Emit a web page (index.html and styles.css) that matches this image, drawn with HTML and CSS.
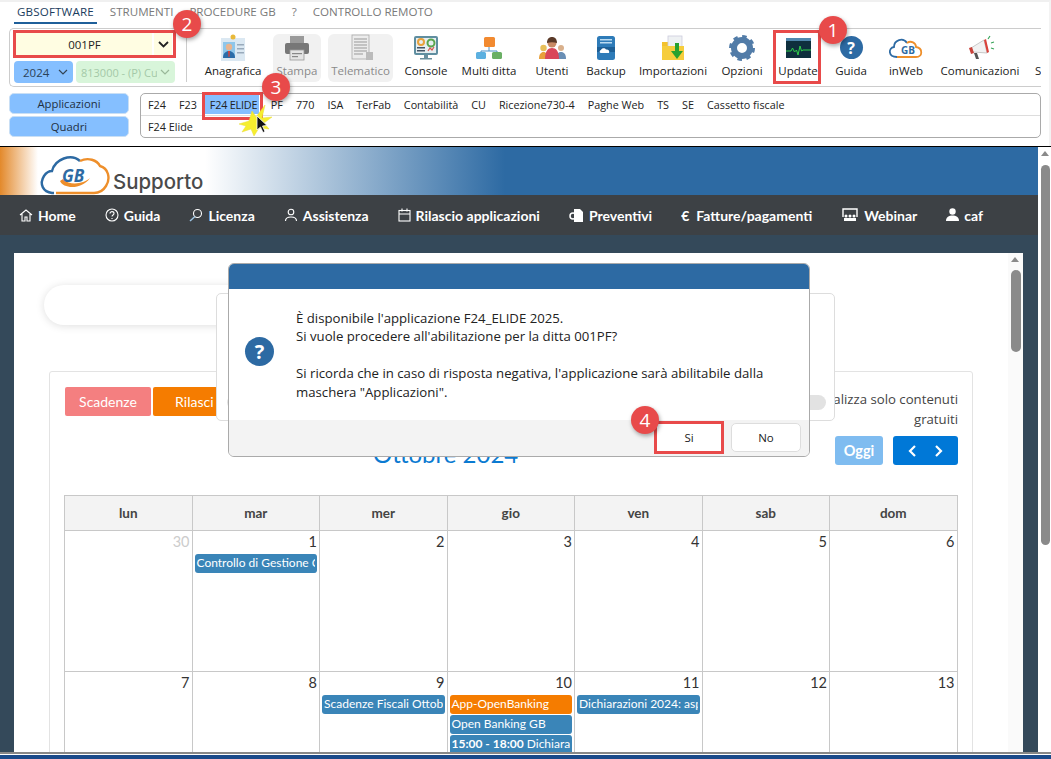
FILE: index.html
```html
<!DOCTYPE html>
<html lang="it">
<head>
<meta charset="utf-8">
<title>GB Software</title>
<link rel="stylesheet" href="styles.css">
</head>
<body>
<div class="app">
  <header class="top">
    <nav class="tabs">
      <span class="tab active">GBSOFTWARE</span>
      <span class="tab">STRUMENTI</span>
      <span class="tab">PROCEDURE GB</span>
      <span class="tab">?</span>
      <span class="tab">CONTROLLO REMOTO</span>
    </nav>
    <div class="toolbar">
      <div class="selectors">
        <div class="sel-company"><span class="sel-value">001PF</span><span class="sel-arrow"><svg width="11" height="7" viewBox="0 0 11 7"><path d="M1 1l4.500 4.500L10 1" fill="none" stroke="#222" stroke-width="1.800"/></svg></span></div>
        <div class="sel-row">
          <div class="sel-year">2024<svg width="10" height="6" viewBox="0 0 10 6"><path d="M1 1l4 4 4-4" fill="none" stroke="#345" stroke-width="1.200"/></svg></div>
          <div class="sel-code"><span class="sel-code-text">813000 - (P) Cu</span><svg width="10" height="6" viewBox="0 0 10 6"><path d="M1 1l4 4 4-4" fill="none" stroke="#9ab89a" stroke-width="1.200"/></svg></div>
        </div>
      </div>
      <div class="tools">
        <div class="tool">
          <svg class="ico" width="30" height="28" viewBox="0 0 30 28"><rect x="3" y="4" width="24" height="23" fill="#dbe8f2"/><rect x="5" y="8" width="12" height="15" fill="#8ec6ea"/><rect x="19" y="10" width="7" height="1.500" fill="#9ab"/><rect x="19" y="14" width="7" height="1.500" fill="#9ab"/><rect x="19" y="18" width="7" height="1.500" fill="#9ab"/><circle cx="15" cy="3" r="2.500" fill="#e8b93a"/><circle cx="11" cy="13" r="3.200" fill="#e9b48e"/><path d="M5 24c0-5 3-7 6-7s6 2 6 7z" fill="#2b6ca8"/><path d="M10 17h2l-.5 6h-1z" fill="#d9423a"/></svg>
          <span class="label">Anagrafica</span>
        </div>
        <div class="tool off">
          <svg class="ico" width="30" height="28" viewBox="0 0 30 28"><rect x="8" y="2" width="14" height="9" fill="#9a9a9a"/><rect x="3" y="9" width="24" height="11" rx="2" fill="#777"/><rect x="8" y="16" width="14" height="10" fill="#e4e4e4" stroke="#999" stroke-width=".8"/><rect x="10" y="19" width="10" height="1.200" fill="#888"/><rect x="10" y="22" width="6" height="1.200" fill="#888"/></svg>
          <span class="label">Stampa</span>
        </div>
        <div class="tool off">
          <svg class="ico" width="30" height="28" viewBox="0 0 30 28"><rect x="6" y="1" width="17" height="24" fill="#ececec" stroke="#aaa" stroke-width=".8"/><path d="M8 5h13M8 8h13M8 11h13M8 14h13M8 17h13M8 20h9" stroke="#999" stroke-width="1"/><rect x="20" y="18" width="7" height="8" fill="#bbb"/></svg>
          <span class="label">Telematico</span>
        </div>
        <div class="tool">
          <svg class="ico" width="30" height="28" viewBox="0 0 30 28"><rect x="3" y="2" width="24" height="19" rx="2" fill="#5f8ea0"/><rect x="5" y="4" width="20" height="15" fill="#e6eef1"/><circle cx="10" cy="8" r="3" fill="none" stroke="#e9a23b" stroke-width="2"/><circle cx="20" cy="9" r="3.500" fill="none" stroke="#5aa64d" stroke-width="2"/><rect x="6" y="13" width="8" height="1.500" fill="#456"/><rect x="6" y="16" width="8" height="1.500" fill="#456"/><path d="M17 17l2-3 2 2 2-3" fill="none" stroke="#d9534f" stroke-width="1.200"/><rect x="13" y="21" width="4" height="3" fill="#6a8f9e"/><rect x="9" y="24" width="12" height="1.500" fill="#6a8f9e"/></svg>
          <span class="label">Console</span>
        </div>
        <div class="tool">
          <svg class="ico" width="30" height="28" viewBox="0 0 30 28"><path d="M15 12v5M7 20v-3h16v3" fill="none" stroke="#4a90c8" stroke-width="1"/><rect x="10" y="3" width="11" height="10" rx="1.500" fill="#f28a30"/><rect x="2" y="18" width="10" height="7" rx="1.500" fill="#5cb0e0"/><rect x="18" y="18" width="10" height="7" rx="1.500" fill="#6aaf64"/></svg>
          <span class="label">Multi ditta</span>
        </div>
        <div class="tool">
          <svg class="ico" width="30" height="28" viewBox="0 0 30 28"><circle cx="6.500" cy="14" r="3.200" fill="#e8c05a"/><path d="M2 25c0-5 2-7 4.500-7S11 20 11 25z" fill="#e8a03a"/><circle cx="24" cy="14" r="3" fill="#d9b08c"/><path d="M19 25c0-5 2-7 5-7s5 2 5 7z" fill="#6a8fb5"/><circle cx="15" cy="9" r="4.500" fill="#c98a64"/><path d="M10 9c0-4 2-6 5-6s5 2 5 6c-3-1-7-1-10 0z" fill="#5a3a28"/><path d="M8 25c0-8 3-11 7-11s7 3 7 11z" fill="#d9475a"/></svg>
          <span class="label">Utenti</span>
        </div>
        <div class="tool">
          <svg class="ico" width="30" height="28" viewBox="0 0 30 28"><rect x="6" y="2" width="18" height="24" rx="2.500" fill="#2e7bb8"/><rect x="9" y="5" width="12" height="1.500" fill="#bcdcf2"/><rect x="9" y="8" width="12" height="1.500" fill="#bcdcf2"/><path d="M6 13h18v5H6z" fill="#1d5f96"/><path d="M10 19c-1.500 0-2-2.500 0-3 .5-2 4-2.500 5-.5 2-.5 4 1 3 3.500z" fill="#fff"/></svg>
          <span class="label">Backup</span>
        </div>
        <div class="tool">
          <svg class="ico" width="30" height="28" viewBox="0 0 30 28"><path d="M4 8h8l2 2v16H4z" fill="#f3c22e"/><rect x="10" y="2" width="14" height="14" fill="#eef1f3" stroke="#ccd" stroke-width=".8"/><path d="M4 12h22v14H4z" fill="#f6cd3c"/><path d="M17 9h4v8h4l-6 8-6-8h4z" fill="#27a12f"/></svg>
          <span class="label">Importazioni</span>
        </div>
        <div class="tool">
          <svg class="ico" width="30" height="28" viewBox="0 0 30 28"><circle cx="15" cy="14" r="8" fill="none" stroke="#527ca8" stroke-width="6"/><circle cx="15" cy="14" r="11.500" fill="none" stroke="#527ca8" stroke-width="3" stroke-dasharray="4.500 4.500"/></svg>
          <span class="label">Opzioni</span>
        </div>
        <div class="tool">
          <svg class="ico" width="30" height="28" viewBox="0 0 30 28"><rect x="3" y="4" width="25" height="20" fill="#0e2f3d"/><rect x="3" y="4" width="25" height="3" fill="#4f87ad"/><path d="M3 17h5l1.500-3 2 4 2-2 1.500 5 2-9 1.500 5 1.500-1H28" fill="none" stroke="#2fd04a" stroke-width="1"/></svg>
          <span class="label">Update</span>
        </div>
        <div class="tool">
          <span class="help-round small">?</span>
          <span class="label">Guida</span>
        </div>
        <div class="tool">
          <svg class="ico wide" width="36" height="28" viewBox="0 0 36 28"><path d="M9 23c-9 0-9-9-3-10 0-7 9-10 13-4" fill="none" stroke="#2d6aa3" stroke-width="1.800"/><path d="M19 9c4-3 9 0 9 4 7 1 7 10 0 10H9" fill="none" stroke="#ee8f2b" stroke-width="1.800"/><text x="13" y="20" class="cloud-text">GB</text></svg>
          <span class="label">inWeb</span>
        </div>
        <div class="tool">
          <svg class="ico" width="30" height="28" viewBox="0 0 30 28"><path d="M6 14l13-8 3 13-14-1z" fill="#f2f2f2" stroke="#bbb" stroke-width=".8"/><path d="M19 6l3 13 2-1-3-13z" fill="#d9423a"/><path d="M4 14l3-1 2 6-3 1z" fill="#c9423a"/><path d="M9 19l2 6h3l-2-6z" fill="#555"/><path d="M23 5l2-3M26 9l3-1M26 14l3 1" stroke="#3aa55a" stroke-width="1.200"/></svg>
          <span class="label">Comunicazioni</span>
        </div>
        <div class="tool tool-cut">
          <span class="ico"></span>
          <span class="label">Strumenti</span>
        </div>
      </div>
    </div>
    <div class="appbar">
      <div class="appbtns">
        <span class="appbtn">Applicazioni</span>
        <span class="appbtn">Quadri</span>
      </div>
      <div class="apppanel">
        <div class="approw">
          <span>F24</span><span>F23</span><span class="selected">F24 ELIDE</span><span>PF</span><span>770</span><span>ISA</span><span>TerFab</span><span>Contabilità</span><span>CU</span><span>Ricezione730-4</span><span>Paghe Web</span><span>TS</span><span>SE</span><span>Cassetto fiscale</span>
        </div>
        <div class="approw">
          <span>F24 Elide</span>
        </div>
      </div>
    </div>
  </header>

  <section class="web">
    <div class="site">
      <div class="banner">
        <svg class="logo" width="72" height="44" viewBox="0 0 72 44"><path d="M16 42H14C5 41 1 33 6 25c2-3 5-5 8-5 3-12 19-18 28-10" fill="none" stroke="#2d6aa3" stroke-width="2.400"/><path d="M42 10c8-4 17-1 20 5 8 2 11 12 6 20-3 5-7 7-12 7H18" fill="none" stroke="#ee8f2b" stroke-width="2.400"/><path d="M22 30c3 8 22 9 30-3-7 6-20 8-27 1z" fill="#ee8f2b"/><text x="24" y="31" class="logo-mark">GB</text></svg>
        <span class="brand">Supporto</span>
      </div>
      <nav class="sitenav">
        <span class="navitem"><svg width="14" height="14" viewBox="0 0 14 14"><path d="M1 7l6-5 6 5M3 6v7h3V9h2v4h3V6" fill="none" stroke="#fff" stroke-width="1.100"/></svg>Home</span>
        <span class="navitem"><svg width="14" height="14" viewBox="0 0 14 14"><circle cx="7" cy="7" r="6" fill="none" stroke="#fff" stroke-width="1.100"/><path d="M5 5.500c0-2.500 4-2.500 4 0 0 1.500-2 1.500-2 3M7 10v1" fill="none" stroke="#fff" stroke-width="1.100"/></svg>Guida</span>
        <span class="navitem"><svg width="14" height="14" viewBox="0 0 14 14"><circle cx="8.500" cy="5.500" r="4" fill="none" stroke="#fff" stroke-width="1.100"/><path d="M6 8.500L1 13" stroke="#9cc4e4" stroke-width="1.500"/></svg>Licenza</span>
        <span class="navitem"><svg width="14" height="14" viewBox="0 0 14 14"><circle cx="7" cy="4" r="2.800" fill="none" stroke="#fff" stroke-width="1.100"/><path d="M1.500 13c0-3 2.500-4 5.500-4s5.500 1 5.500 4" fill="none" stroke="#fff" stroke-width="1.100"/></svg>Assistenza</span>
        <span class="navitem"><svg width="13" height="14" viewBox="0 0 13 14"><rect x="1" y="2.500" width="11" height="10.500" fill="none" stroke="#fff" stroke-width="1.100"/><path d="M1 6h11M4 .5v3M9 .5v3" stroke="#fff" stroke-width="1.100"/></svg>Rilascio applicazioni</span>
        <span class="navitem"><svg width="15" height="15" viewBox="0 0 15 15"><path d="M5 1h6l3 3v10H5z" fill="#fff"/><circle cx="4" cy="8" r="3" fill="none" stroke="#fff" stroke-width="1.500"/></svg>Preventivi</span>
        <span class="navitem navtight"><span class="euro">€</span>Fatture/pagamenti</span>
        <span class="navitem"><svg width="18" height="14" viewBox="0 0 16 14"><path d="M1 9V1h14v8" fill="none" stroke="#fff" stroke-width="1.400"/><circle cx="4" cy="8" r="1.500" fill="#fff"/><circle cx="8" cy="8" r="1.500" fill="#fff"/><circle cx="12" cy="8" r="1.500" fill="#fff"/><path d="M2 13v-3h4v3zM6 13v-3h4v3zM10 13v-3h4v3z" fill="#fff"/></svg>Webinar</span>
        <span class="navitem"><svg width="13" height="14" viewBox="0 0 13 14"><circle cx="6.500" cy="3.500" r="3.200" fill="#fff"/><path d="M0 13c0-4 3-5.500 6.500-5.500S13 9 13 13z" fill="#fff"/></svg>caf</span>
      </nav>
      <div class="main">
        <div class="content">
          <div class="pane">
            <div class="searchpill"></div>
            <div class="card">
              <div class="filters">
                <div class="filter-btns">
                  <span class="fbtn red">Scadenze</span>
                  <span class="fbtn orange">Rilasci Applicazioni</span>
                </div>
                <p class="freeonly">Visualizza solo contenuti gratuiti</p>
              </div>
              <div class="calhead">
                <h2 class="month">Ottobre 2024</h2>
                <div class="calctl">
                  <span class="today">Oggi</span>
                  <span class="pager">
                    <svg width="10" height="14" viewBox="0 0 10 14"><path d="M8 2L3 7l5 5" fill="none" stroke="#fff" stroke-width="2.200"/></svg>
                    <svg width="10" height="14" viewBox="0 0 10 14"><path d="M2 2l5 5-5 5" fill="none" stroke="#fff" stroke-width="2.200"/></svg>
                  </span>
                </div>
              </div>
              <div class="calendar">
                <div class="dow">lun</div><div class="dow">mar</div><div class="dow">mer</div><div class="dow">gio</div><div class="dow">ven</div><div class="dow">sab</div><div class="dow">dom</div>

                <div class="day"><div class="num muted">30</div></div>
                <div class="day"><div class="num">1</div><div class="ev">Controllo di Gestione Online</div></div>
                <div class="day"><div class="num">2</div></div>
                <div class="day"><div class="num">3</div></div>
                <div class="day"><div class="num">4</div></div>
                <div class="day"><div class="num">5</div></div>
                <div class="day"><div class="num">6</div></div>

                <div class="day"><div class="num">7</div></div>
                <div class="day"><div class="num">8</div></div>
                <div class="day"><div class="num">9</div><div class="ev">Scadenze Fiscali Ottobre</div></div>
                <div class="day"><div class="num">10</div><div class="ev org">App-OpenBanking</div><div class="ev">Open Banking GB</div><div class="ev"><b>15:00 - 18:00</b> Dichiarazioni</div></div>
                <div class="day"><div class="num">11</div><div class="ev">Dichiarazioni 2024: aspetti</div></div>
                <div class="day"><div class="num">12</div></div>
                <div class="day"><div class="num">13</div></div>
              </div>
            </div>
          </div>
          <div class="innerscroll"><span class="arrow-up"></span><span class="thumb"></span></div>
        </div>
      </div>
    </div>
    <div class="outerscroll"><span class="arrow-up"></span><span class="thumb"></span></div>
  </section>
  <footer class="taskbar"></footer>

  <!-- overlays -->
  <div class="backmodal"><span class="backbar"></span></div>
  <div class="dialog">
    <div class="dlg-head"></div>
    <div class="dlg-body">
      <span class="help-round">?</span>
      <div class="dlg-text">
        <p>È disponibile l'applicazione F24_ELIDE 2025.<br>Si vuole procedere all'abilitazione per la ditta 001PF?</p>
        <p>Si ricorda che in caso di risposta negativa, l'applicazione sarà abilitabile dalla maschera "Applicazioni".</p>
      </div>
    </div>
    <div class="dlg-foot">
      <button class="dbtn yes">Si</button>
      <button class="dbtn no">No</button>
    </div>
  </div>

  <span class="mark mark-company"></span>
  <span class="mark mark-elide"></span>
  <span class="mark mark-update"></span>
  <span class="badge b1">1</span>
  <span class="badge b2">2</span>
  <span class="badge b3">3</span>
  <span class="badge b4">4</span>
  <svg class="cursor" width="40" height="36" viewBox="0 0 40 36"><path d="M1 23l10-3 3-10 4 6 9-12-3 13 10-1-8 6 5 6-10-1-5 8-3-7-9 3 4-6z" fill="#f6ee2e" stroke="#e8dc3a" stroke-width=".5"/><path d="M19 15v14l3.500-3 2.500 5.500 2-1-2.500-5.500 4.500-.5z" fill="#111" stroke="#fff" stroke-width=".8"/></svg>
</div>
</body>
</html>
```
FILE: styles.css
```css
* { box-sizing: border-box; }
html, body { margin: 0; padding: 0; height: 100%; overflow: hidden; }
body { font-family: "Open Sans", "Noto Sans", sans-serif; color: #222; background: #f3f3f3; }
p, h2 { margin: 0; }

.app { position: relative; width: 1051px; height: 759px; display: flex; flex-direction: column; overflow: hidden; }

/* top application chrome */
.top { height: 146px; flex: none; background: #fff; border-top: 2px solid #f0f0f0; border-right: 2px solid #f3f3f3; }
.tabs { height: 26px; display: flex; gap: 16px; padding-left: 17px; font-size: 11.6px; line-height: 20px; color: #7a7a7a; }
.tab { height: 22px; white-space: nowrap; }
.tab.active { color: #1c3d5e; border-bottom: 2px solid #1f5f99; margin: 0 -3px; padding: 0 3px; letter-spacing: .15px; }

.toolbar { display: flex; height: 59px; margin-left: 9px; width: 1032px; border: 1px solid #ccc; border-right: 0; border-radius: 5px 0 0 5px; overflow: hidden; }
.selectors { width: 176px; flex: none; padding: 4px 0 0 5px; display: flex; flex-direction: column; gap: 5px; }
.sel-company { width: 156px; height: 23px; margin-left: 1px; display: flex; font-size: 11.5px; line-height: 23px; }
.sel-value { flex: 1; text-align: center; padding-left: 1px; background: #fffde2; }
.sel-arrow { width: 18px; margin-left: 2px; display: flex; align-items: center; justify-content: center; background: #fffde2; }
.sel-row { display: flex; gap: 3px; margin-left: -1px; }
.sel-year { width: 59px; height: 22px; padding: 0 5px 0 9px; display: flex; align-items: center; justify-content: space-between; background: #85bfff; border-radius: 4px; font-size: 11.5px; color: #2b4258; }
.sel-code { width: 99px; height: 22px; padding: 0 5px; display: flex; align-items: center; justify-content: space-between; background: #d8f5da; border-radius: 4px; font-size: 11px; color: #a4c9a8; }
.sel-code-text { width: 76px; overflow: hidden; white-space: nowrap; }

.tools { flex: 1; margin: 5px 0; padding-left: 10px; border-left: 1px solid #ccc; display: grid; grid-template-columns: 72px 56px 72px 58px 68px 58px 50px 84px 54px 58px 48px 62px 86px 60px; height: 48px; }
.tool { display: flex; flex-direction: column; align-items: center; font-size: 11.5px; white-space: nowrap; min-width: 0; }
.tool-cut { align-items: flex-start; padding-left: 12px; }
.ico { height: 28px; flex: none; display: block; }
.label { line-height: 16px; margin-top: 1px; text-align: center; }
.tool.off { color: #8a8a8a; background: #f1f1f1; border-radius: 6px; margin: 0 4px 0 4px; }
.tool.off + .tool.off { margin: 0 4px 0 3px; }

.help-round { display: flex; align-items: center; justify-content: center; width: 29px; height: 29px; border-radius: 50%; background: #2d6aa3; color: #fff; font-weight: 700; font-size: 20px; font-family: "Open Sans", sans-serif; flex: none; }
.help-round.small { width: 23px; height: 23px; margin: 2px 0 3px; font-size: 16px; }
.cloud-text { font: 700 10px "Open Sans", sans-serif; fill: #2d6aa3; }

.appbar { display: flex; margin: 6px 0 0 9px; gap: 11px; }
.appbtns { width: 120px; display: flex; flex-direction: column; gap: 2px; }
.appbtn { height: 21px; background: #85bfff; border: 1px solid #c9dff5; border-radius: 5px; text-align: center; font-size: 11.3px; line-height: 19px; color: #1f2f3f; }
.apppanel { width: 901px; height: 45px; border: 1px solid #aaa; border-radius: 5px; padding: 0 0 0 3px; }
.approw { display: flex; gap: 13px; height: 21px; padding-left: 4px; font-size: 10.8px; line-height: 21px; white-space: nowrap; align-items: stretch; }
.approw + .approw { border-top: 1px solid #ddd; margin-left: -3px; padding-left: 7px; height: 22px; }
.approw .selected { background: #85bfff; margin: 1px -1px 1px -5px; padding: 0 0 0 5px; height: 19px; line-height: 19px; width: 54px; letter-spacing: -.2px; }

/* browser area */
.web { flex: 1; min-height: 0; display: flex; border-top: 1px solid #000; background: #fff; }
.site { width: 1038px; flex: none; display: flex; flex-direction: column; }
.banner { height: 48px; flex: none; display: flex; align-items: flex-end; padding-left: 38px; background: linear-gradient(90deg, #e3892b 0, #fff 38px, #fff 205px, #2d6aa3 505px); }
.logo { flex: none; margin-right: 3px; }
.brand { font: 500 20.4px Inter, "Open Sans", sans-serif; color: #4a4a4a; line-height: 26px; }
.logo-mark { font: italic 700 17px "Open Sans", sans-serif; fill: #2d6aa3; }
.sitenav { height: 40px; flex: none; display: flex; align-items: center; gap: 29px; padding-left: 19px; background: #3d4145; color: #fff; font: 700 14px Lato, sans-serif; white-space: nowrap; }
.navitem { display: flex; align-items: center; gap: 5px; }
.navtight { gap: 7px; }
.euro { font-size: 14px; }
.main { flex: 1; min-height: 0; padding: 18px 15px 0 14px; background: #34495a; }
.content { height: 100%; display: flex; background: #fff; overflow: hidden; }
.pane { width: 994px; flex: none; padding: 32px 0 0 30px; }
.searchpill { width: 500px; height: 40px; border-radius: 20px; background: #fff; box-shadow: 0 1px 9px rgba(0,0,0,.13); }
.card { width: 924px; margin: 46px 0 0 5px; padding: 15px 14px 15px 15px; background: #fff; border: 1px solid #e3e3e3; border-radius: 3px; height: 500px; font-family: Lato, sans-serif; }
.filters { display: flex; justify-content: space-between; height: 49px; }
.filter-btns { display: flex; gap: 2px; height: 29px; }
.fbtn { height: 29px; color: #fff; font-size: 14px; line-height: 29px; text-align: center; border-radius: 2px; white-space: nowrap; }
.fbtn.red { width: 86px; background: #f47f80; }
.fbtn.orange { width: 160px; background: #f57c00; }
.freeonly { width: 180px; text-align: right; font: 400 13.2px/20px "Open Sans", sans-serif; color: #444; padding-top: 2px; }
.calhead { display: flex; align-items: flex-start; height: 59px; }
.month { margin: 4px 0 0 308px; font: 400 24px Lato, sans-serif; color: #0b7ad1; line-height: 28px; }
.calctl { margin-left: auto; display: flex; gap: 10px; }
.today { width: 48px; height: 29px; background: #7fbcf0; color: #fff; font-weight: 700; font-size: 14.5px; line-height: 29px; text-align: center; border-radius: 3px; }
.pager { width: 65px; height: 29px; background: #0078d7; border-radius: 3px; display: flex; align-items: center; justify-content: space-around; padding: 0 5px; }
.calendar { display: grid; grid-template-columns: repeat(7, 127.5px); grid-template-rows: 35px 141px 142px; margin-left: -1px; border-right: 1px solid #c8c8c8; width: 894px; }
.dow { border: 1px solid #c8c8c8; border-width: 1px 0 0 1px; background: #f3f3f3; text-align: center; font: 700 13.5px Lato, sans-serif; line-height: 34px; color: #444; }
.day { border: 1px solid #c8c8c8; border-width: 1px 0 0 1px; padding: 1px 2px 0; min-width: 0; }
.num { text-align: right; font-size: 14.5px; line-height: 19px; color: #333; margin-bottom: 3px; }
.num.muted { color: #ccc; }
.ev { height: 19px; margin-bottom: 1px; padding-left: 2px; background: #3a85b8; border-right: 2px solid #3a85b8; color: #fff; font-size: 12px; line-height: 18px; border-radius: 3px; white-space: nowrap; overflow: hidden; }
.ev.org { background: #f57c00; border-right-color: #f57c00; }

.innerscroll { width: 15px; flex: none; position: relative; background: #fafafa; }
.outerscroll { flex: 1; position: relative; background: #fff; }
.arrow-up { position: absolute; left: 3px; top: 4px; width: 0; height: 0; border: 4.5px solid transparent; border-top: 0; border-bottom: 5px solid #8a8a8a; }
.thumb { position: absolute; left: 3px; top: 17px; width: 10px; height: 82px; background: #8a8a8a; border-radius: 5px; }
.outerscroll .thumb { top: 18px; height: 380px; width: 9px; }

.taskbar { height: 7px; flex: none; background: #1a4a8a; border-top: 2px solid #888; box-shadow: inset 0 1px #fff; }

/* overlays */
.backmodal { position: absolute; left: 216px; top: 293px; width: 619px; height: 128px; background: #fff; border: 1px solid #ddd; border-radius: 5px; }
.backbar { position: absolute; left: 10px; right: 8px; top: 101px; height: 15px; border-radius: 8px; background: #e2e2e2; }
.dialog { position: absolute; left: 228px; top: 263px; width: 582px; height: 194px; display: flex; flex-direction: column; background: #fff; border: 1px solid #aaa; border-radius: 6px; overflow: hidden; }
.dlg-head { height: 25px; flex: none; background: #2d6aa3; }
.dlg-body { flex: 1; display: flex; align-items: center; padding: 1px 0 0 16px; }
.dlg-body .help-round { margin-bottom: 8px; }
.dlg-text { margin-left: 22px; width: 490px; font-size: 13.2px; line-height: 18.500px; color: #222; }
.dlg-text p + p { margin-top: 18.500px; }
.dlg-foot { height: 36px; flex: none; display: flex; justify-content: flex-end; gap: 9px; padding: 3px 8px 0 0; background: #f3f3f3; }
.dbtn { height: 29px; background: #fff; border: 1px solid #ddd; border-radius: 5px; font: 400 11.5px "Open Sans", sans-serif; color: #222; }
.dbtn.yes { width: 66px; border-radius: 0; outline: 3px solid #e84a4a; outline-offset: -1px; }
.dbtn.no { width: 70px; }

.mark { position: absolute; border: 3px solid #e84a4a; pointer-events: none; }
.mark-company { left: 13px; top: 30px; width: 163px; height: 28px; }
.mark-elide { left: 202px; top: 92px; width: 61px; height: 28px; }
.mark-update { left: 773px; top: 30px; width: 48px; height: 54px; }

.badge { position: absolute; width: 28px; height: 28px; border-radius: 50%; background: #e84a4a; color: #fff; font: 400 19px/28px "Open Sans", sans-serif; text-align: center; box-shadow: 1px 2px 4px rgba(0,0,0,.35); }
.b1 { left: 819px; top: 16px; }
.b2 { left: 173px; top: 10px; }
.b3 { left: 262px; top: 73px; }
.b4 { left: 631px; top: 406px; }
.cursor { position: absolute; left: 238px; top: 101px; }
```
